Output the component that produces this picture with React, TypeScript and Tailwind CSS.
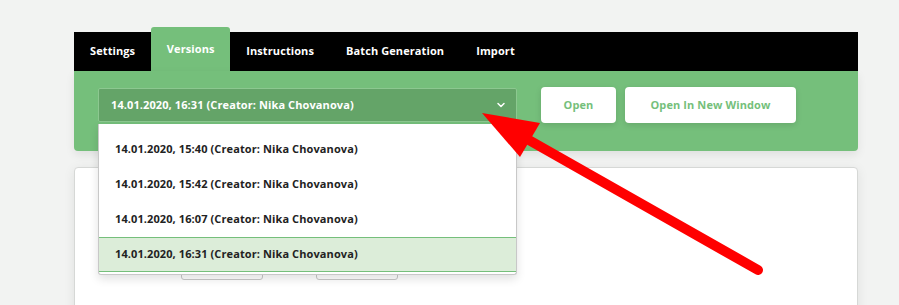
import { ChevronDown } from 'lucide-react';

const versions = [
  '14.01.2020, 15:40 (Creator: Nika Chovanova)',
  '14.01.2020, 15:42 (Creator: Nika Chovanova)',
  '14.01.2020, 16:07 (Creator: Nika Chovanova)',
  '14.01.2020, 16:31 (Creator: Nika Chovanova)',
];

const tabs = ['Settings', 'Versions', 'Instructions', 'Batch Generation', 'Import'];

export default function App() {
  const selected = versions[3];

  return (
    <div className="relative h-[305px] overflow-hidden bg-[#f2f3f2] pt-[27px] pl-[74px] font-['Open_Sans',sans-serif] tracking-[0.1px]">
      <div className="w-[784px]">
        {/* Tabs */}
        <div className="mt-[5px] flex h-[39px] bg-black text-[11px] font-bold text-white">
          {tabs.map((t) =>
            t === 'Versions' ? (
              <div
                key={t}
                className="-mt-[5px] flex h-[44px] w-[79px] items-center justify-center rounded-t-[3px] bg-[#75bf7b] pt-[1px]"
              >
                {t}
              </div>
            ) : (
              <div key={t} className="flex items-center px-[16px]">
                {t}
              </div>
            )
          )}
        </div>

        {/* Versions panel */}
        <div className="relative z-10 flex h-[80px] items-start gap-[24px] rounded-b-[4px] bg-[#75bf7b] px-[24px] pt-[17px] shadow-[0_4px_10px_rgba(0,0,0,0.08)]">
          <div className="relative w-[419px]">
            <div className="flex h-[34px] items-center justify-between rounded-[2px] border border-[#8cc890] bg-[#64a468] pl-[12px] pr-[9px] text-[11px] font-bold text-white">
              <span className="pt-[1px]">{selected}</span>
              <ChevronDown className="h-[12px] w-[12px]" strokeWidth={3} />
            </div>

            {/* Dropdown list */}
            <div className="absolute left-0 top-[36px] w-[419px] rounded-b-[3px] border border-t-0 border-[#c8c8c8] bg-white pt-[8px] pb-[2px] shadow-[0_4px_10px_rgba(0,0,0,0.12)]">
              {versions.map((v) => (
                <div
                  key={v}
                  className={
                    v === selected
                      ? 'flex h-[35px] items-center border-y border-[#75bf7b] bg-[#dcedd9] pl-[16px] text-[11px] font-bold text-[#222]'
                      : 'flex h-[35px] items-center pl-[16px] text-[11px] font-bold text-[#222]'
                  }
                >
                  {v}
                </div>
              ))}
            </div>
          </div>

          <div className="flex gap-[9px]">
            <button className="flex h-[36px] w-[75px] -mt-[1px] items-center justify-center rounded-[4px] bg-white text-[11px] font-bold text-[#75bf7b] shadow-[0_2px_6px_rgba(0,0,0,0.12)]">
              Open
            </button>
            <button className="flex h-[36px] w-[171px] -mt-[1px] items-center justify-center rounded-[4px] bg-white text-[11px] font-bold text-[#75bf7b] shadow-[0_2px_6px_rgba(0,0,0,0.12)]">
              Open In New Window
            </button>
          </div>
        </div>

        {/* Content card */}
        <div className="mt-[16px] h-[200px] rounded-t-[4px] border border-[#d6d8d6] bg-white shadow-[0_2px_12px_rgba(0,0,0,0.08)]">
          <div className="flex gap-[53px] pl-[106px] pt-[80px]">
            <div className="h-[32px] w-[82px] rounded-[3px] border border-[#c8c8c8]" />
            <div className="h-[32px] w-[82px] rounded-[3px] border border-[#c8c8c8]" />
          </div>
        </div>
      </div>

      {/* Annotation arrow */}
      <svg className="pointer-events-none absolute left-0 top-0 z-20" width="899" height="305" viewBox="0 0 899 305">
        <line x1="758" y1="270" x2="520" y2="135" stroke="#ff0000" strokeWidth="10" strokeLinecap="round" />
        <polygon points="482,113 540,123 520,157" fill="#ff0000" />
      </svg>
    </div>
  );
}
